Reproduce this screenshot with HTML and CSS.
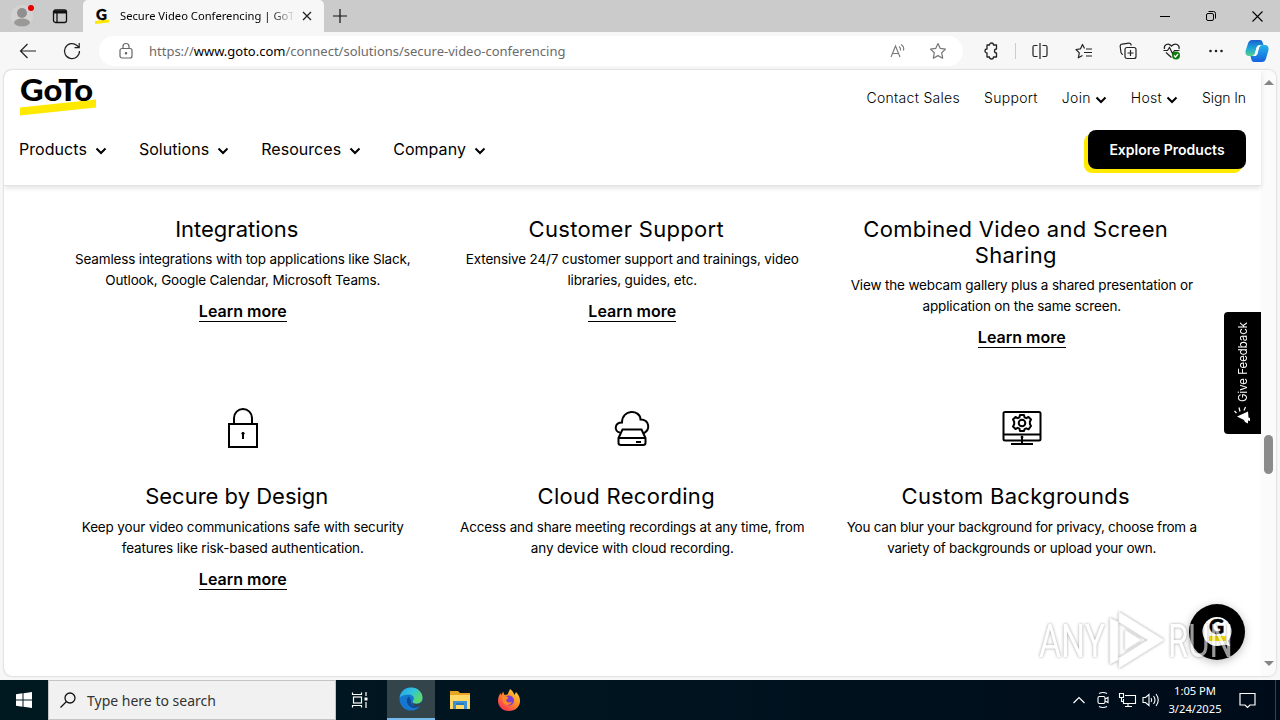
FILE: index.html
```html
<!DOCTYPE html>
<html lang="en">
<head>
    <meta charset="UTF-8">
    <meta name="viewport" content="width=device-width, initial-scale=1.0">
    <title>Secure Video Conferencing | GoTo</title>
    <link rel="stylesheet" href="styles.css">
</head>
<body>
    <div class="titlebar">
        <div class="profile">
            <svg width="24" height="28" viewBox="0 0 24 28"><circle cx="12" cy="14" r="11" fill="#d4d2d0"/><circle cx="12" cy="11" r="5" fill="#8f8f8f"/><ellipse cx="12" cy="20.500" rx="8" ry="4" fill="#999"/><circle cx="21" cy="6" r="3" fill="#e60000"/></svg>
        </div>
        <div class="tab-actions">
            <svg width="16" height="16" viewBox="0 0 16 16" fill="none" stroke="#111" stroke-width="1.300"><rect x="1.500" y="2" width="13" height="12.500" rx="2"/><path d="M2 4h12" stroke-width="3"/><path d="M5 4v10"/></svg>
        </div>
        <div class="tab">
            <svg width="16" height="16" viewBox="0 0 16 16"><path d="M1 13l14-1.500v3L1 16z" fill="#ffe900"/><text x="2" y="12" class="logo-text" font-size="15" stroke="#000" stroke-width=".4">G</text></svg>
            <span class="tab-title">Secure Video Conferencing | GoTo</span>
            <svg width="10" height="10" viewBox="0 0 10 10" stroke="#222" stroke-width="1.300"><path d="M1 1l8 8M9 1L1 9"/></svg>
        </div>
        <div class="new-tab">
            <svg width="14" height="14" viewBox="0 0 14 14" stroke="#111" stroke-width="1.200"><path d="M7 0v14M0 7h14"/></svg>
        </div>
        <div class="window-buttons">
            <span><svg width="10" height="10" viewBox="0 0 10 10" stroke="#000"><path d="M0 5.500h10"/></svg></span>
            <span><svg width="10" height="10" viewBox="0 0 10 10" fill="none" stroke="#000"><rect x=".5" y="2.500" width="7" height="7" rx="1.500"/><path d="M2.500 .5h5a2 2 0 0 1 2 2v5"/></svg></span>
            <span><svg width="11" height="11" viewBox="0 0 11 11" stroke="#000" stroke-width="1.100"><path d="M.5.5l10 10M10.500.5l-10 10"/></svg></span>
        </div>
    </div>

    <div class="toolbar">
        <span class="tool"><svg width="18" height="16" viewBox="0 0 18 16" fill="none" stroke="#222" stroke-width="1.200"><path d="M17 8H1.500M8.500 1l-7 7 7 7"/></svg></span>
        <span class="tool"><svg width="18" height="18" viewBox="0 0 18 18" fill="none" stroke="#222" stroke-width="1.200"><path d="M16.500 9A7.500 7.500 0 1 1 14 3.500L16 5.500M16.200 1v4.700h-4.700"/></svg></span>
        <div class="address">
            <svg class="lock" width="14" height="16" viewBox="0 0 14 16" fill="none" stroke="#666" stroke-width="1.200"><rect x="1" y="5.500" width="12" height="9.500" rx="2"/><path d="M4 5.500V3.500a3 3 0 0 1 6 0v2"/><circle cx="7" cy="10.300" r=".7" fill="#666"/></svg>
            <span class="url">https://<b>www.goto.com</b>/connect/solutions/secure-video-conferencing</span>
            <span class="address-icon"><svg width="18" height="18" viewBox="0 0 18 18" fill="none" stroke="#777" stroke-width="1.100"><path d="M2 15L6.500 4 11 15M3.500 11.500h6M10 4.500q2 1.500 1.500 4M12 2.500q3.500 2 2.500 6"/></svg></span>
            <span class="address-icon"><svg width="18" height="18" viewBox="0 0 18 18" fill="none" stroke="#777" stroke-width="1.200" stroke-linejoin="round"><path d="M9 1.500l2.300 4.900 5.200.7-3.800 3.700 1 5.400L9 13.600l-4.700 2.600 1-5.400L1.500 7.100l5.200-.7z"/></svg></span>
        </div>
        <span class="tool extensions"><svg width="16" height="16" viewBox="0 0 16 16" fill="none" stroke="#222" stroke-width="1.300" stroke-linejoin="round"><path d="M4 2h2.500a2 2 0 0 1 4 0H13.500V6a2 2 0 0 0 0 4v4h-3a2 2 0 0 1-4 0H4v-4a2 2 0 0 1 0-4z"/></svg></span>
        <span class="divider"></span>
        <span class="tool"><svg width="16" height="16" viewBox="0 0 16 16" fill="none" stroke="#222" stroke-width="1.200"><path d="M5.500 2.500H2.500a1.500 1.500 0 0 0-1.500 1.500v8a1.500 1.500 0 0 0 1.500 1.500h3M10.500 2.500h3A1.500 1.500 0 0 1 15 4v8a1.500 1.500 0 0 1-1.500 1.500h-3M8 0v16"/></svg></span>
        <span class="tool"><svg width="18" height="16" viewBox="0 0 18 16" fill="none" stroke="#222" stroke-width="1.200" stroke-linejoin="round"><path d="M9.500 5.500L7.500 1.500l-2 4.300-4.500.7L4.300 9.800l-1 5 4.200-2.300M11 6h6M9 9.500h8M11 13h6"/></svg></span>
        <span class="tool"><svg width="18" height="18" viewBox="0 0 18 18" fill="none" stroke="#222" stroke-width="1.200"><rect x="6" y="5.500" width="11" height="11" rx="2"/><path d="M11.500 8v6M8.500 11h6M4 12.500a2.500 2.500 0 0 1-2-2L1.200 4.500a2 2 0 0 1 1.800-2.300l7-1a2 2 0 0 1 2 1.300l.3 1"/></svg></span>
        <span class="tool"><svg width="18" height="18" viewBox="0 0 18 18" fill="none" stroke="#222" stroke-width="1.200"><path d="M1.500 7C.5 3 5 0 8.500 4 12.500 0 17 3 16 7M3 10.500l5.500 5M.5 8.500h4l2-3 3 6 2-3h5"/><circle cx="13" cy="13.500" r="4" fill="#107c10" stroke="none"/><path d="M11 13.500l1.500 1.500 2.500-3" stroke="#fff"/></svg></span>
        <span class="tool"><svg width="14" height="4" viewBox="0 0 14 4" fill="#222"><circle cx="1.500" cy="2" r="1.300"/><circle cx="7" cy="2" r="1.300"/><circle cx="12.500" cy="2" r="1.300"/></svg></span>
        <span class="tool copilot">
            <svg width="24" height="24" viewBox="0 0 24 24">
                <defs>
                    <linearGradient id="cpA" x1="0" y1="0" x2="0" y2="1"><stop offset="0" stop-color="#1a5fd0"/><stop offset=".5" stop-color="#19a5dc"/><stop offset="1" stop-color="#54d08c"/></linearGradient>
                    <linearGradient id="cpB" x1="0" y1="0" x2="0" y2="1"><stop offset="0" stop-color="#23b5e8"/><stop offset="1" stop-color="#1560e0"/></linearGradient>
                </defs>
                <path d="M7 1h8q2 0 2.500 2l1 3h-4q-2 0-3 3l-2 6q-1 2-3 2H3q-3-1-2.500-5L3 4.500Q4 1 7 1z" fill="url(#cpA)"/>
                <path d="M17 23H9q-2 0-2.500-2l-1-4h4q2 0 3-3l2-6q1-2 3-2H21q3 1 2.500 5L21 19.500Q20 23 17 23z" fill="url(#cpB)"/>
                <path d="M11.500 8.500q1-2 2.800-2.300L12.500 15q-1 2-2.800 2.300z" fill="#fff"/>
            </svg>
        </span>
    </div>

    <div class="viewport">
        <div class="page">
            <header class="header">
                <div class="header-top">
                    <svg class="logo" width="78" height="40" viewBox="0 0 78 40">
                        <path d="M1 30.500L77 22.500v8L1 38.500z" fill="#ffe900"/>
                        <text x="1" y="23.500" class="logo-text" font-size="29.500" textLength="73" lengthAdjust="spacingAndGlyphs">GoTo</text>
                    </svg>
                    <nav class="top-nav">
                        <a>Contact Sales</a>
                        <a>Support</a>
                        <a class="join">Join <svg class="chevron" width="12" height="8" viewBox="0 0 12 8"><path d="M1.500 1.500L6 6l4.500-4.500"/></svg></a>
                        <a class="host">Host <svg class="chevron" width="12" height="8" viewBox="0 0 12 8"><path d="M1.500 1.500L6 6l4.500-4.500"/></svg></a>
                        <a class="sign-in">Sign In</a>
                    </nav>
                </div>
                <div class="header-main">
                    <nav class="main-nav">
                        <a>Products <svg class="chevron" width="12" height="8" viewBox="0 0 12 8"><path d="M1.500 1.500L6 6l4.500-4.500"/></svg></a>
                        <a>Solutions <svg class="chevron" width="12" height="8" viewBox="0 0 12 8"><path d="M1.500 1.500L6 6l4.500-4.500"/></svg></a>
                        <a>Resources <svg class="chevron" width="12" height="8" viewBox="0 0 12 8"><path d="M1.500 1.500L6 6l4.500-4.500"/></svg></a>
                        <a>Company <svg class="chevron" width="12" height="8" viewBox="0 0 12 8"><path d="M1.500 1.500L6 6l4.500-4.500"/></svg></a>
                    </nav>
                    <a class="explore">Explore Products</a>
                </div>
            </header>

            <main class="features">
                <section class="feature">
                    <h3 class="tight">Integrations</h3>
                    <p>Seamless integrations with top applications like Slack,<br>Outlook, Google Calendar, Microsoft Teams.</p>
                    <a class="more">Learn more</a>
                </section>
                <section class="feature">
                    <h3>Customer Support</h3>
                    <p>Extensive 24/7 customer support and trainings, video<br>libraries, guides, etc.</p>
                    <a class="more">Learn more</a>
                </section>
                <section class="feature">
                    <h3>Combined Video and Screen<br>Sharing</h3>
                    <p>View the webcam gallery plus a shared presentation or<br>application on the same screen.</p>
                    <a class="more">Learn more</a>
                </section>
                <section class="feature">
                    <svg class="feature-icon" width="40" height="40" viewBox="0 0 40 40"><rect x="6" y="16" width="28" height="23"/><path d="M11 16V10a9 9 0 0 1 18 0v6"/><circle cx="20" cy="25.500" r="1.200" fill="#000" stroke-width="1"/><path d="M20 26v5"/></svg>
                    <h3 class="tight">Secure by Design</h3>
                    <p>Keep your video communications safe with security<br>features like risk-based authentication.</p>
                    <a class="more">Learn more</a>
                </section>
                <section class="feature">
                    <svg class="feature-icon" width="40" height="40" viewBox="0 0 40 40"><path d="M8 24.500C2 24 2 14.500 10 14.500 10 1 28 1 28.500 11.500 37.500 11.500 39 22 31 25.500" /><path d="M10.500 21.500h19l4 8.500v5q0 2-2.500 2H9q-2.500 0-2.500-2v-5zM6.500 30h27M24 34h5"/></svg>
                    <h3>Cloud Recording</h3>
                    <p>Access and share meeting recordings at any time, from<br>any device with cloud recording.</p>
                </section>
                <section class="feature">
                    <svg class="feature-icon" width="40" height="40" viewBox="0 0 40 40"><rect x="1.500" y="4" width="37" height="28.500" rx="1.500"/><path d="M1.500 26.500h37M20 28v8M9 36h22"/><circle cx="20" cy="29" r="1" stroke-width="1"/><circle cx="20" cy="15" r="3.300"/><path d="M18 7h4l.6 2.400 1.700.8 2.200-1.200 2.500 2.500-1.200 2.200.2 2.600 1 1.700-2.500 3.300-2.200-1-1.700.8L22 23h-4l-.6-2.400-1.700-.8-2.200 1.200-2.500-2.500 1.200-2.200v-2.600l-1.200-2.200 2.500-2.500 2.200 1.200 1.700-.8z" stroke-linejoin="round"/></svg>
                    <h3>Custom Backgrounds</h3>
                    <p class="narrow">You can blur your background for privacy, choose from a<br>variety of backgrounds or upload your own.</p>
                </section>
            </main>

            <div class="feedback">
                <span>Give Feedback</span>
                <svg width="18" height="18" viewBox="0 0 18 18" fill="#fff"><path d="M3 10.500L14 5.500l.5 6 1.500.5v3l-2-.5v3l-3-1.500-1-2z"/><path d="M2.500 7L.5 5M6 5.500L5 1.500M10 4.500l1.500-3.500" stroke="#fff" stroke-width="1.200"/></svg>
            </div>
            <div class="chat">
                <svg width="32" height="32" viewBox="0 0 32 32"><circle cx="16" cy="15.500" r="14.500" fill="#fff"/><path d="M26 22l3 8-9-2z" fill="#fff"/><text x="8" y="18" class="logo-text" font-size="21" stroke="#000" stroke-width=".5">G</text><path d="M8 20h17v5H8z" fill="#f5dc00"/></svg>
            </div>
            <svg class="watermark" width="200" height="66" viewBox="0 0 200 66">
                <g class="mark-text" font-size="47">
                    <text x="2" y="50" textLength="66" lengthAdjust="spacingAndGlyphs">ANY</text>
                    <text x="131" y="50" textLength="65" lengthAdjust="spacingAndGlyphs">RUN</text>
                </g>
                <path class="mark-logo" d="M73 11l8 4v38l-8 4zM82 5l45 28-45 28V51l29-18-29-18z"/>
                <path class="mark-logo" d="M88 23l16 10-16 10z"/>
            </svg>
        </div>
        <div class="scrollbar">
            <span class="arrow-up"></span>
            <span class="thumb"></span>
            <span class="arrow-down"></span>
        </div>
    </div>

    <div class="taskbar">
        <span class="start"><svg width="16" height="16" viewBox="0 0 16 16" fill="#fff"><path d="M0 2.200L6.500 1.300V7.500H0zM7.500 1.200L16 0v7.500H7.500zM0 8.500h6.500v6.200L0 13.800zM7.500 8.500H16V16l-8.500-1.200z"/></svg></span>
        <div class="search">
            <svg width="16" height="16" viewBox="0 0 16 16" fill="none" stroke="#111" stroke-width="1.300"><circle cx="10" cy="6" r="5"/><path d="M6.500 9.500L.5 15.500"/></svg>
            <span>Type here to search</span>
        </div>
        <span class="task"><svg width="18" height="18" viewBox="0 0 18 18" fill="none" stroke="#fff" stroke-width="1.200"><path d="M1.500 1.500v2h9v-2M1.500 16.500v-2h9v2M15 1v4M15 11v6"/><rect x="2.500" y="6" width="8" height="6"/><path d="M13.500 8h3" stroke-width="3"/></svg></span>
        <span class="task active">
            <svg width="24" height="24" viewBox="0 0 24 24">
                <defs><linearGradient id="edgeTop" x1="0" y1="0" x2="1" y2=".6"><stop offset="0" stop-color="#239ee0"/><stop offset=".5" stop-color="#2fc2df"/><stop offset="1" stop-color="#5edb62"/></linearGradient></defs>
                <circle cx="12" cy="12" r="11.500" fill="#1577cf"/>
                <path d="M.6 11C1.500 4.500 6 .5 12 .5c7 0 11.500 5 11.500 10 0 4-3 6-6.500 6-3 0-4-1.200-3-2.500 2-2.500.5-6.500-4-6.500C5.500 7.500 2 9 .6 11z" fill="url(#edgeTop)"/>
                <path d="M9.500 9.500c-3 3-2 9 3 11 3 1.200 6.500.5 9-2.500-4 2-10 1-9.500-3.500 0-2-1-4-2.500-5z" fill="#104a96"/>
                <path d="M14 13.500c-1.500 2 0 3.700 3.500 3.400 2.500 0 4.500-1 5.500-2.400l1 2.500-2 2c-5 1.500-9-.5-9-3.500z" fill="#34444b"/>
            </svg>
        </span>
        <span class="task explorer"><svg width="22" height="20" viewBox="0 0 22 20"><path d="M1 1h8l2 2h10v3H1z" fill="#e8a524"/><path d="M1 5h20v14H1z" fill="#ffd867"/><path d="M4 11h14v8h-3v-4H7v4H4z" fill="#3b93d4"/><path d="M7 13h8v2H7z" fill="#267ab8"/></svg></span>
        <span class="task">
            <svg width="24" height="24" viewBox="0 0 24 24">
                <defs><linearGradient id="fox" x1="1" y1="0" x2=".2" y2="1"><stop offset="0" stop-color="#ffe640"/><stop offset=".45" stop-color="#ff9527"/><stop offset="1" stop-color="#f82d58"/></linearGradient></defs>
                <path d="M12 23C5 23 1 18 1 12.500 1 9 2.500 6.500 4 5l.5 2.500L6 3.500 7.500 7l3-.5L13 1c3 2 3.500 4 4.500 6l1.500-3c3 3 4 6 4 9 0 6-5 10-11 10z" fill="url(#fox)"/>
                <circle cx="12" cy="12.500" r="5" fill="#7b3fd2"/>
                <path d="M5 9c2-1 5-1 6.500 1L9 12c1 3 4 3 6 1.500C14 18 7 18 6 14z" fill="#ff8a22"/>
            </svg>
        </span>
        <div class="tray">
            <span><svg width="12" height="8" viewBox="0 0 12 8" fill="none" stroke="#fff" stroke-width="1.200"><path d="M.5 7L6 1.500 11.500 7"/></svg></span>
            <span><svg width="14" height="18" viewBox="0 0 14 18" fill="none" stroke="#fff" stroke-width="1.100"><rect x="2" y="5.500" width="7" height="7" rx="1.500"/><path d="M9 8l3-1.500v5L9 10M3 2.500q4-2 8 0M3 15.500q4 2 8 0"/></svg></span>
            <span><svg width="17" height="16" viewBox="0 0 17 16" fill="none" stroke="#fff" stroke-width="1.100"><path d="M6 3.500h10.500v8H4.500V7M9 11.500v3M6 14.500h7"/><path d="M.5 1.500h4v4h-4zM2.500 5.500v4h2"/></svg></span>
            <span><svg width="18" height="14" viewBox="0 0 18 14" fill="none" stroke="#fff" stroke-width="1.100"><path d="M1 4.500h2.500l3.500-3v11l-3.500-3H1zM9 5q1.500 2 0 4M11.500 3q3 4 0 8M14 1q4.500 6 0 12"/></svg></span>
        </div>
        <div class="clock">
            <div>1:05 PM</div>
            <div>3/24/2025</div>
        </div>
        <span class="notifications"><svg width="17" height="17" viewBox="0 0 17 17" fill="none" stroke="#fff" stroke-width="1.200"><path d="M1 1.500h15v11.500h-5l-2.500 2.500L6 13H1z"/></svg></span>
    </div>
</body>
</html>
```
FILE: styles.css
```css
* {
    box-sizing: border-box;
    margin: 0;
    padding: 0;
}

body {
    width: 1280px;
    height: 720px;
    overflow: hidden;
    background: #f7f7f7;
    font-family: "Noto Sans", "Open Sans", sans-serif;
    color: #000;
    white-space: nowrap;
}

svg {
    display: block;
    flex: none;
    overflow: visible;
}

/* browser window */
.titlebar {
    display: flex;
    height: 32px;
    background: #cbcbcb;
}

.profile {
    width: 44px;
    padding-left: 10px;
    padding-top: 2px;
}

.tab-actions {
    width: 39px;
    padding: 8px 0 0 8px;
}

.tab {
    display: flex;
    align-items: center;
    width: 241px;
    padding-left: 11px;
    background: #f7f7f7;
    border-radius: 5px 5px 0 0;
}

.tab-title {
    width: 173px;
    margin: 0 9px 0 10px;
    padding-bottom: 2px;
    overflow: hidden;
    font-size: 11.2px;
    -webkit-mask-image: linear-gradient(90deg, #000 150px, transparent 176px);
    mask-image: linear-gradient(90deg, #000 150px, transparent 176px);
}

.new-tab {
    padding: 9px;
}

.window-buttons {
    display: flex;
    margin-left: auto;
}

.window-buttons span {
    display: flex;
    align-items: center;
    justify-content: center;
    width: 46px;
}

.toolbar {
    display: flex;
    align-items: center;
    height: 38px;
    padding-left: 6px;
}

.tool {
    display: flex;
    align-items: center;
    justify-content: center;
    width: 44px;
}

.address {
    display: flex;
    align-items: center;
    width: 864px;
    height: 30px;
    margin-left: 5px;
    padding: 0 5px 0 20px;
    background: #fff;
    border-radius: 15px;
}

.url {
    flex: 1;
    margin-left: 16px;
    color: #6b6b6b;
    font-size: 13px;
    letter-spacing: -0.01px;
}

.url b {
    color: #000;
    font-weight: 400;
}

.address-icon {
    display: flex;
    justify-content: center;
    width: 40px;
}

.extensions {
    width: 48px;
    margin-left: 4px;
}

.divider {
    width: 1px;
    height: 16px;
    margin-right: 2px;
    background: #ccc;
}

.copilot {
    width: 40px;
    margin-left: -1px;
}

.viewport {
    display: flex;
    width: 1272px;
    height: 606px;
    margin: 0 4px 4px;
    overflow: hidden;
    background: #fff;
    border-radius: 8px;
    box-shadow: 0 0 2px #aaa;
}

/* page */
.page {
    position: relative;
    width: 1257px;
    font-family: Inter, "Liberation Sans", sans-serif;
}

.header {
    height: 116px;
    padding: 0 15px;
    border-bottom: 1px solid #e4e4e4;
    box-shadow: 0 2px 5px rgba(0, 0, 0, 0.12);
}

.header-top {
    display: flex;
    justify-content: space-between;
    height: 60px;
}

.logo {
    margin-top: 7px;
}

.logo-text {
    font-family: Lato, sans-serif;
    font-weight: 900;
}

.top-nav {
    display: flex;
    gap: 24px;
    height: 55px;
    align-items: center;
    font-size: 14px;
    font-weight: 300;
    letter-spacing: 0.3px;
}

.top-nav a,
.main-nav a {
    display: flex;
    align-items: center;
    gap: 4px;
}

.top-nav .sign-in {
    letter-spacing: -0.1px;
}

.chevron {
    fill: none;
    stroke: #000;
    stroke-width: 2;
    margin-top: 4px;
}

.header-main {
    display: flex;
    justify-content: space-between;
}

.main-nav {
    display: flex;
    gap: 32px;
    height: 38px;
    font-size: 16px;
    letter-spacing: 0.05px;
}

.main-nav a {
    gap: 8px;
}

.explore {
    width: 158px;
    height: 39px;
    border-radius: 8px;
    background: #000;
    box-shadow: -4px 4px 0 #ffe900;
    color: #fff;
    font-size: 14px;
    font-weight: 600;
    line-height: 40px;
    text-align: center;
}

.features {
    display: grid;
    grid-template-columns: repeat(3, 389.5px);
    grid-template-rows: 190px auto;
    padding: 30px 0 0 44px;
    text-align: center;
}

.feature h3 {
    padding-right: 12px;
    margin-bottom: 7px;
    font-size: 22px;
    font-weight: 400;
    line-height: 26px;
    letter-spacing: 0.3px;
}

.feature h3.tight {
    letter-spacing: 0;
}

.feature p {
    font-size: 13.5px;
    line-height: 21px;
    letter-spacing: -0.15px;
}

.feature p.narrow {
    letter-spacing: -0.24px;
}

.more {
    display: inline-block;
    margin-top: 10px;
    border-bottom: 1px solid #000;
    font-size: 16px;
    font-weight: 600;
    line-height: 20px;
}

.feature-icon {
    margin: 2px auto 35px;
    fill: none;
    stroke: #000;
    stroke-width: 2;
}

.feature-icon ~ h3 {
    margin-bottom: 8px;
}

/* floating widgets */
.feedback {
    position: absolute;
    top: 242px;
    right: 0;
    display: flex;
    flex-direction: column;
    align-items: center;
    gap: 4px;
    width: 37px;
    height: 122px;
    padding-top: 10px;
    border-radius: 4px 0 0 4px;
    background: #000;
    color: #fff;
    font-size: 11.4px;
}

.feedback span {
    writing-mode: vertical-rl;
    transform: rotate(180deg);
}

.chat {
    position: absolute;
    right: 16px;
    bottom: 16px;
    display: flex;
    align-items: center;
    justify-content: center;
    width: 56px;
    height: 56px;
    border-radius: 50%;
    background: #000;
    box-shadow: 0 2px 10px rgba(0, 0, 0, 0.25);
}

.watermark {
    position: absolute;
    left: 1033px;
    bottom: 3px;
    filter: drop-shadow(0 0 1.5px rgba(0, 0, 0, 0.6));
    opacity: 0.6;
}

.mark-text {
    fill: #fff;
    font-family: Roboto, sans-serif;
}

.mark-logo {
    fill: #fff;
    stroke: #eee;
}

.scrollbar {
    display: flex;
    flex-direction: column;
    align-items: center;
    width: 15px;
    padding: 10px 0;
    background: #fbfbfb;
}

.arrow-up,
.arrow-down {
    border: 5px solid transparent;
    border-top: 0;
    border-bottom-color: #858585;
}

.arrow-down {
    border-top: 5px solid #858585;
    border-bottom: 0;
    margin-top: auto;
}

.thumb {
    width: 9px;
    height: 39px;
    margin-top: 350px;
    border-radius: 5px;
    background: #8b8b8b;
}

/* windows taskbar */
.taskbar {
    display: flex;
    height: 40px;
    background: linear-gradient(90deg, #001820, #001420 50%, #000b19);
    color: #fff;
}

.start,
.task {
    display: flex;
    align-items: center;
    justify-content: center;
    width: 48px;
}

.search {
    display: flex;
    align-items: center;
    gap: 11px;
    width: 288px;
    padding-left: 11px;
    background: #f1f1f1;
    border: 1px solid #c4c4c4;
    color: #333;
    font-size: 14px;
}

.task.active {
    margin-left: 3px;
    background: #34444b;
    border-bottom: 2px solid #76b9ed;
}

.explorer {
    margin: 0 1px;
}

.tray {
    display: flex;
    margin-left: auto;
}

.tray span {
    display: flex;
    align-items: center;
    justify-content: center;
    width: 24px;
}

.clock {
    width: 64px;
    padding-top: 2px;
    font-size: 11.2px;
    line-height: 18px;
    text-align: center;
}

.notifications {
    display: flex;
    align-items: center;
    width: 49px;
    margin-right: 4px;
    padding-left: 12px;
    border-right: 1px solid #39424d;
}
```
